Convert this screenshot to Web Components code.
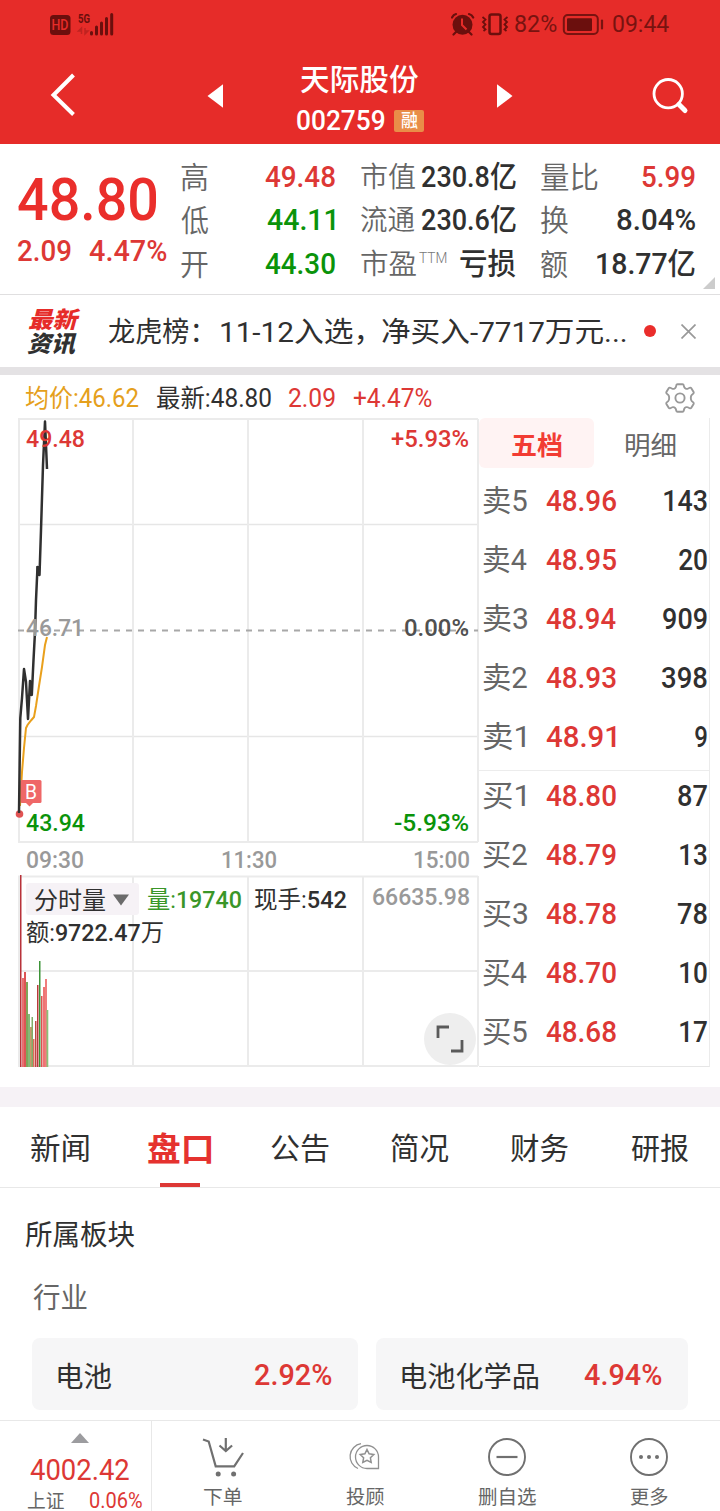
<!DOCTYPE html>
<html lang="zh-CN">
<head>
<meta charset="utf-8">
<title>天际股份 002759</title>
<style>
  body { margin: 0; background: #fff; font-family: Roboto, "Noto Sans CJK SC", sans-serif; color: #303030; }
</style>
</head>
<body>
<stock-app></stock-app>
<script>
class Base extends HTMLElement {
  constructor() {
    super();
    this.attachShadow({ mode: 'open' });
  }
  connectedCallback() {
    if (!this.shadowRoot.firstChild) this.shadowRoot.innerHTML = this.render();
  }
}

class StockApp extends Base {
  render() {
    return `<style>
      :host { display: flex; flex-direction: column; width: 720px; height: 1511px; overflow: hidden; }
    </style>
    <status-bar></status-bar>
    <nav-bar></nav-bar>
    <quote-panel></quote-panel>
    <news-bar></news-bar>
    <chart-header></chart-header>
    <market-board></market-board>
    <tab-strip></tab-strip>
    <sector-panel></sector-panel>
    <bottom-bar></bottom-bar>`;
  }
}

class StatusBar extends Base {
  render() {
    return `<style>
      :host { display: flex; justify-content: space-between; align-items: center; height: 48px; box-sizing: border-box;
        padding: 0 51px 0 49px; background: #e62c29; color: #781310; }
      .g { display: flex; align-items: center; }
      svg { display: block; flex: none; }
    </style>
    <div class="g">
      <svg width="66" height="48" viewBox="49 0 66 48">
        <rect x="50" y="15" width="20.500" height="20" rx="3.500" fill="#6b0f0d"/>
        <text x="51.500" y="30" font-size="14" font-weight="500" textLength="17" lengthAdjust="spacingAndGlyphs" fill="#e62c29">HD</text>
        <text x="78" y="22.800" font-size="13.500" font-weight="700" textLength="12" lengthAdjust="spacingAndGlyphs" fill="#6b0f0d">5G</text>
        <path d="M81.500 34V28l-3 3h3M85 28v6l3-3h-3" stroke="#bf2320" stroke-width="1.500" fill="none"/>
        <path d="M91.500 32.500v1.500M96.500 27v7M101.500 23v11M106.500 18.500v15.500M111.700 14.500v19.500" stroke="#6b0f0d" stroke-width="3" stroke-linecap="round"/>
      </svg>
    </div>
    <div class="g">
      <svg width="64" height="48" viewBox="451 0 64 48">
        <g fill="#6b0f0d" stroke="#6b0f0d">
          <circle cx="462.500" cy="24.800" r="10" stroke="none"/>
          <path d="M452 17.500q1.500-3 4-3.500M469 14q3 .8 4.200 3.500M456 32l-2.500 2.500M469 32l2.500 2.500" stroke-width="2.200" fill="none" stroke-linecap="round"/>
          <path d="M462 18.500v6.500l4.500 4.500" stroke="#e62c29" stroke-width="2" fill="none"/>
          <rect x="489.500" y="14.500" width="11" height="19.500" rx="2" fill="none" stroke-width="2.500"/>
          <path d="M482.500 17l3 2.500-2.500 2.500 2.500 2.500-2.500 2.500 2.500 2.500-2 1.500M507.500 17l-3 2.500 2.500 2.500-2.500 2.500 2.500 2.500-2.500 2.500 2 1.500" fill="none" stroke-width="1.800"/>
        </g>
      </svg>
      <fit-text size="23.500" ink="42" dy=".5">82%</fit-text>
      <svg width="56" height="48" viewBox="557 0 56 48">
        <rect x="563.800" y="15" width="34" height="19" rx="4" fill="none" stroke="#781310" stroke-width="2"/>
        <rect x="567" y="18.300" width="25" height="12.700" rx="1" fill="#6b0f0d"/>
        <path d="M602 20.500v8" stroke="#781310" stroke-width="2.200" stroke-linecap="round"/>
      </svg>
      <fit-text size="23.500" ink="56" dy=".5">09:44</fit-text>
    </div>`;
  }
}

class NavBar extends Base {
  render() {
    return `<style>
      :host { display: grid; grid-template-columns: 297px 128px 295px; height: 96px; background: #e62c29; color: #fff; }
      svg { display: block; }
      .mid { display: flex; flex-direction: column; padding-top: 15px; }
      .name { padding-left: 4px; height: 31px; font-weight: 500; display: flex; align-items: center; }
      .code { display: flex; align-items: center; gap: 9px; height: 24px; margin-top: 14.500px; font-weight: 500; }
      .tag { width: 30px; height: 22px; border-radius: 2px; background: #e98d48; display: flex; align-items: center; justify-content: center; }
    </style>
    <svg width="297" height="96" viewBox="0 48 297 96">
      <path d="M73.500 75L53.500 95l20 19.500" fill="none" stroke="#fff" stroke-width="4"/>
      <path d="M207.500 96L223 84.300v23.500z" fill="#fff"/>
    </svg>
    <div class="mid">
      <div class="name"><fit-text size="30" ink="117.500" dy="1">天际股份</fit-text></div>
      <div class="code"><fit-text size="27.500" ink="88">002759</fit-text><div class="tag"><fit-text size="18" ink="17" dy="0">融</fit-text></div></div>
    </div>
    <svg width="295" height="96" viewBox="425 48 295 96">
      <path d="M512.500 96L497 84.300v23.500z" fill="#fff"/>
      <circle cx="668.200" cy="93.700" r="14.200" fill="none" stroke="#fff" stroke-width="2.800"/>
      <path d="M679 104.500l6 6" stroke="#fff" stroke-width="5" stroke-linecap="round"/>
    </svg>`;
  }
}

class QuotePanel extends Base {
  render() {
    const row = (cls, l, lw, ls, v, vw, extra = '') =>
      `<div class="r"><fit-text size="${ls}" ink="${lw}" dy="1" class="l">${l}</fit-text>${extra}<fit-text size="30" ink="${vw}" class="${cls}">${v}</fit-text></div>`;
    return `<style>
      :host { position: relative; display: grid; grid-template-columns: 163px 154px 181px 178.500px; box-sizing: border-box; height: 151px;
        padding: 11px 0 0 18px; border-bottom: 1px solid #e0dfe0; }
      .price { color: #ea2e2b; font-weight: 500; padding-top: 15px; }
      .chg { display: flex; gap: 18px; color: #dd3835; font-weight: 500; padding-top: 6.500px; }
      .c { display: flex; flex-direction: column; }
      .r { display: flex; justify-content: space-between; align-items: center; height: 43.670px; font-weight: 500; }
      .l { color: #666; font-weight: 350; }
      .up { color: #dd3835; } .down { color: #0a930a; }
      .c2 { padding-left: 26px; } .c3 { padding-left: 25px; }
      .ttm { color: #777; font-weight: 300; margin-left: -10px; }
      svg { position: absolute; right: 5px; bottom: 5px; }
    </style>
    <div><div class="price"><fit-text size="60" ink="139">48.80</fit-text></div>
      <div class="chg"><fit-text size="29" ink="52.500">2.09</fit-text><fit-text size="29" ink="78">4.47%</fit-text></div></div>
    <div class="c">${row('up','高',27,30,'49.48',70)}${row('down','低',27,30,'44.11',68)}${row('down','开',27,30,'44.30',70)}</div>
    <div class="c c2">${row('','市值',54,28,'230.8亿',94)}${row('','流通',54,28,'230.6亿',94)}${row('','市盈',55,28,'亏损',56,'<fit-text class="ttm" size="15.500" ink="28" dy="-5.500">TTM</fit-text>')}</div>
    <div class="c c3">${row('up','量比',57,30,'5.99',53)}${row('','换',27,30,'8.04%',78)}${row('','额',27,30,'18.77亿',98)}</div>
    <svg width="12" height="12"><path d="M0 12L12 0v12z" fill="#ccc"/></svg>`;
  }
}

class NewsBar extends Base {
  render() {
    return `<style>
      :host { display: flex; align-items: center; box-sizing: border-box; height: 80px; padding: 0 24px 0 27px; border-bottom: 8px solid #e4e2e4; }
      .logo { width: 81px; font-weight: 900; font-style: italic; display: flex; flex-direction: column; gap: 1px; padding-top: 2px; }
      .logo :first-child { color: #e62c29; margin-left: 1px; }
      .txt { display: flex; width: 519px; padding-top: 5px; }
      .dot { width: 12px; height: 12px; border-radius: 50%; background: #ea2d2b; margin: 0 25px 0 17px; }
    </style>
    <div class="logo"><fit-text size="23" ink="53">最新</fit-text><fit-text size="23" ink="50">资讯</fit-text></div>
    <div class="txt"><fit-text size="28.500" ink="91">龙虎榜：</fit-text><fit-text size="28.500" ink="143" style="margin-left:22px">11-12入选，</fit-text><fit-text size="28.500" ink="244" style="margin-left:18px">净买入-7717万元...</fit-text></div>
    <div class="dot"></div>
    <svg width="15" height="15"><path d="M.5.5l14 14M14.500.5l-14 14" stroke="#999" stroke-width="1.700"/></svg>`;
  }
}

class ChartHeader extends Base {
  render() {
    return `<style>
      :host { display: flex; align-items: center; box-sizing: border-box; height: 43px; padding: 2px 24px 0 25px; }
      .a { color: #e5a01c; } .b { color: #dd3835; }
      fit-text { margin-right: 18px; }
      svg { margin-left: auto; }
    </style>
    <fit-text class="a" size="25" ink="114" dy=".5">均价:46.62</fit-text>
    <fit-text size="25" ink="114" dy=".5">最新:48.80</fit-text>
    <fit-text class="b" size="25" ink="46" dy=".5">2.09</fit-text>
    <fit-text class="b" size="25" ink="79" dy=".5">+4.47%</fit-text>
    <svg width="32" height="32" viewBox="-16 -16 32 32" fill="none" stroke="#999" stroke-width="1.900" stroke-linejoin="round">
      <path d="M-2.500-14.500h5q1 0 1.200 1l.5 2q.3 1.200 1.500 1.700t2 0l2-1q1-.5 1.600.5l2.300 4q.5 1-.3 1.700l-1.500 1.400q-1 1-1 3.200t1 3.200l1.500 1.400q.8.700.3 1.700l-2.300 4q-.6 1-1.600.5l-2-1q-1-.5-2 0t-1.500 1.700l-.5 2q-.2 1-1.200 1h-5q-1 0-1.200-1l-.5-2q-.3-1.200-1.500-1.700t-2 0l-2 1q-1 .5-1.600-.5l-2.300-4q-.5-1 .3-1.700l1.500-1.400q1-1 1-3.200t-1-3.200l-1.500-1.400q-.8-.7-.3-1.700l2.300-4q.6-1 1.600-.5l2 1q1 .5 2 0t1.500-1.700l.5-2q.2-1 1.200-1z" transform="scale(1 .95)"/>
      <circle r="4.600"/>
    </svg>`;
  }
}

class MarketBoard extends Base {
  render() {
    return `<style>
      :host { display: grid; grid-template-columns: 479px 231px; height: 669px; border-bottom: 20px solid #f6f2f6; }
    </style>
    <time-chart></time-chart><order-book></order-book>`;
  }
}

class TimeChart extends Base {
  render() {
    const t = (x, y, w, s, fill = '#303030', size = 24) =>
      `<text x="${x - 1}" y="${y}" textLength="${w + 2}" lengthAdjust="spacingAndGlyphs" fill="${fill}" font-size="${size}">${s}</text>`;
    const bars = [[20,875,'#b8323a',1.5],[22,978,'#e87070',2],[24,972,'#dd5555',2],[26,982,'#7da65a',2],[28,1014,'#86b878',2],[30,1027,'#c99a6c',2],
      [31.5,1017,'#7fae68',1.5],[33,1039,'#e06a5a',1.5],[35,1021,'#c04545',1.5],[37,985,'#b83a3a',1.5],[39,961,'#3c9438',1.5],[41,996,'#dd5050',1.5],[43,987,'#ee7474',2],[45,979,'#f07c7c',2],[46.5,1010,'#8ac078',1.8]];
    return `<style>:host { display: block; } svg { display: block; font-weight: 500; } tspan { font-weight: 400; }</style>
    <svg width="479" height="669" viewBox="0 418 479 669">
      <g stroke="#ebebeb" stroke-width="2" fill="none">
        <path d="M18 419H478M18 842H478M18 876.500H478M18 971H478M18 1066H478"/>
        <path d="M18 524.500H478M18 736.500H478" stroke-width="1.300" stroke="#e6e6e6"/>
        <path d="M19 419V842M133 419V842M248 419V842M363 419V842M478 419V842M19 876V1066M133 876V1066M248 876V1066M363 876V1066M478 876V1066"/>
      </g>
      <path d="M18 630.500H478" stroke="#a8a8a8" stroke-width="2" stroke-dasharray="6 6"/>
      ${bars.map(b => `<rect x="${b[0]}" y="${b[1]}" width="${b[3]}" height="${1067 - b[1]}" fill="${b[2]}"/>`).join('')}
      <path d="M20 806L22 772 24 748 26 728 27.500 725 31 720.500 34 717 36 706 39 686 42 667 45 645 47 637" fill="none" stroke="#e9a01c" stroke-width="2"/>
      <circle cx="19.500" cy="814" r="3.800" fill="#e15353"/>
      <rect x="20.500" y="780" width="21" height="23" rx="1.500" fill="#ef6767"/>
      <path d="M26 803h7l-3.500 3.500z" fill="#ef6767"/>
      ${t(26, 799, 10, 'B', '#fff', 20).replace('<text', '<text font-weight="400"')}
      <path d="M19 813L19.700 760 20.300 718 22 698 24 669 26 682 28 719 30 681 31.800 695 33.500 660 35 632 36 600 37.500 567 39.500 575 41 530 43 465 45 421.500 47 469" fill="none" stroke="#303030" stroke-width="2.500" stroke-linejoin="round"/>
      <path d="M38 566v10M30.500 682v14" stroke="#303030" stroke-width="3"/>
      ${t(27,447,57,'49.48','#dd3835')}${t(392,447,76,'+5.93%','#dd3835')}
      ${t(27,636,56,'46.71','#999')}${t(405,636,63,'0.00%','#505050')}
      ${t(27,831,57,'43.94','#0a930a')}${t(395,831,73,'-5.93%','#0a930a')}
      ${t(27,868,56,'09:30','#999')}${t(222,868,54,'11:30','#999')}${t(414,868,55,'15:00','#999')}
      <rect x="26" y="883" width="113" height="32" rx="3" fill="#f6f2f6"/>
      <g font-weight="400">${t(35,908.500,70,'分时量')}</g>
      <path d="M113 894.500h16l-8 11z" fill="#6b6b6b"/>
      ${t(148,908,93,'<tspan>量:</tspan>19740','#3a9628')}${t(255,908,91,'<tspan>现手:</tspan>542')}
      ${t(373,904.500,96,'66635.98','#999')}${t(27,941,136,'<tspan>额:</tspan>9722.47<tspan>万</tspan>')}
      <circle cx="450" cy="1039" r="26" fill="#eee"/>
      <path d="M438 1038v-11h11M451 1051h11v-11" fill="none" stroke="#5a5a5a" stroke-width="2.800"/>
    </svg>`;
  }
}

class OrderBook extends Base {
  render() {
    const rows = [['卖5','48.96','143',43],['卖4','48.95','20',28],['卖3','48.94','909',44],['卖2','48.93','398',45],['卖1','48.91','9',12],
      ['买1','48.80','87',29],['买2','48.79','13',27],['买3','48.78','78',29],['买4','48.70','10',27],['买5','48.68','17',27]];
    return `<style>
      :host { display: block; box-sizing: border-box; height: 649px; border-right: 1px solid #ebebeb; border-bottom: 1px solid #e6e6e6; }
      .tabs { display: grid; grid-template-columns: 115px 114px; height: 50px; margin-bottom: 3.500px; }
      .tabs div { display: flex; align-items: center; justify-content: center; padding-top: 3px; box-sizing: border-box; }
      .on { background: #fff3f3; border-radius: 6px; color: #f23c33; font-weight: 700; }
      .off { color: #666; }
      .row { display: grid; grid-template-columns: 62.500px 1fr auto; align-items: center; height: 59px; box-sizing: border-box; padding: 0 2px 0 4px; }
      .row.sep { background: linear-gradient(#ececec, #ececec) 0 3.500px / 100% 1px no-repeat; }
      .l { color: #666; font-weight: 400; } .p { color: #dd3835; font-weight: 500; } .q { font-weight: 500; }
    </style>
    <div class="tabs"><div class="on"><fit-text size="26" ink="50" dy="1">五档</fit-text></div><div class="off"><fit-text size="26" ink="50" dy="1">明细</fit-text></div></div>
    ${rows.map((r, i) => `<div class="row ${i === 5 ? 'sep' : ''}"><fit-text class="l" size="30" ink="${/1/.test(r[0]) ? 42 : 44}">${r[0]}</fit-text><fit-text class="p" size="30" ink="70">${r[1]}</fit-text><fit-text class="q" size="30" ink="${r[3]}">${r[2]}</fit-text></div>`).join('')}`;
  }
}

class TabStrip extends Base {
  render() {
    const tabs = ['新闻', '盘口', '公告', '简况', '财务', '研报'];
    return `<style>
      :host { display: grid; grid-template-columns: repeat(6, 120px); height: 80px; border-bottom: 1px solid #e8e8e8; }
      div { display: flex; flex-direction: column; align-items: center; justify-content: space-between; padding-top: 27px; box-sizing: border-box; height: 80px; }
      .on { color: #e5322f; font-weight: 700; padding-top: 25px; }
      .on::after { content: ""; width: 40px; height: 4px; background: #dd3835; }
    </style>
    ${tabs.map((t, i) => `<div class="${i === 1 ? 'on' : ''}"><fit-text size="${i === 1 ? 33 : 29.5}" ink="${i === 1 ? 63.5 : 57.5}" dy="1">${t}</fit-text></div>`).join('')}`;
  }
}

class SectorPanel extends Base {
  render() {
    return `<style>
      :host { display: block; height: 232px; box-sizing: border-box; padding: 32px 32px 0 24.500px; }
      .k { margin: 35px 0 0 8px; color: #666; }
      .cards { display: grid; grid-template-columns: 326px 312px; gap: 18px; margin: 27px 0 0 7.500px; }
      .card { display: flex; justify-content: space-between; align-items: center; height: 72px; padding: 3px 26px 0; box-sizing: border-box; background: #f6f6f7; border-radius: 8px; }
      .card b { color: #dd3835; font-weight: 500; }
    </style>
    <fit-text size="28" ink="110" dy="2">所属板块</fit-text>
    <div class="k"><fit-text size="28" ink="54" dy="2">行业</fit-text></div>
    <div class="cards">
      <div class="card"><fit-text size="28" ink="53" dy="2">电池</fit-text><b><fit-text size="29" ink="77" dy="0">2.92%</fit-text></b></div>
      <div class="card"><fit-text size="28" ink="136" dy="2">电池化学品</fit-text><b><fit-text size="29" ink="78" dy="0">4.94%</fit-text></b></div>
    </div>`;
  }
}

class BottomBar extends Base {
  render() {
    const icons = [
      ['下单', 38, `<path d="M203 1439.500l5.700 2 7 24.800h18.500l8.800-13.300M225.800 1438v12.500M219.500 1445.500l6.300 5.500 6.300-5.500" stroke-width="2.200"/><g fill="#707070" stroke="none"><circle cx="218.200" cy="1474" r="2.500"/><circle cx="233.600" cy="1474" r="2.500"/></g>`, 223],
      ['投顾', 38, `<g stroke="#909090" stroke-width="1.300"><path d="M367 1445.500a11.500 11.500 0 1 0 0 23h11.500v-11.500a11.500 11.500 0 0 0-11.500-11.500z"/><path d="M361 1443.700a13 13 0 0 0-3 24.800"/><path d="M367 1449.500l2.100 4.300 4.700.7-3.400 3.300.8 4.700-4.200-2.200-4.200 2.200.8-4.700-3.400-3.300 4.700-.7z" stroke-width="1.500"/></g>`, 365],
      ['删自选', 58, `<circle cx="507" cy="1457" r="18"/><path d="M496.500 1457h21" stroke-width="2.200"/>`, 507],
      ['更多', 38, `<circle cx="649" cy="1457" r="18"/><g fill="#707070" stroke="none"><circle cx="641" cy="1457" r="2"/><circle cx="649" cy="1457" r="2"/><circle cx="657" cy="1457" r="2"/></g>`, 649]];
    return `<style>
      :host { display: grid; grid-template-columns: 152px repeat(4, 142px); height: 91px; box-sizing: border-box; border-top: 1px solid #e8e8e8; background: #fff; color: #666; }
      .idx { border-right: 1px solid #e8e8e8; padding-top: 12px; }
      .idx svg { display: block; margin-left: 71px; }
      .v { color: #dd3835; margin: 11px 0 0 29.500px; }
      .row { display: flex; justify-content: space-between; align-items: center; padding: 5.500px 9px 0 27px; }
      .row .p { color: #dd3835; }
      .b { display: flex; flex-direction: column; align-items: center; padding-top: 14px; }
      .b svg { display: block; }
      .b fit-text { margin-top: 7.500px; }
    </style>
    <div class="idx"><svg width="18" height="10"><path d="M0 10L9 0l9 10z" fill="#9c9c9f"/></svg>
      <div class="v"><fit-text size="30" ink="99" dy=".5">4002.42</fit-text></div>
      <div class="row"><fit-text size="19.500" ink="37" dy="1">上证</fit-text><fit-text class="p" size="21.500" ink="52">0.06%</fit-text></div></div>
    ${icons.map(i => `<div class="b"><svg width="44" height="44" viewBox="${i[3] - 22} 1435 44 44" fill="none" stroke="#707070" stroke-width="1.900">${i[2]}</svg><fit-text size="19.500" ink="${i[1]}" dy="1">${i[0]}</fit-text></div>`).join('')}`;
  }
}

/* A single line of text whose drawn glyphs span exactly `ink` pixels. */
class FitText extends Base {
  render() {
    const size = +this.getAttribute('size'), ink = +this.getAttribute('ink'), dy = this.getAttribute('dy') || 0;
    const cs = getComputedStyle(this);
    const ctx = document.createElement('canvas').getContext('2d');
    ctx.font = `${cs.fontStyle} ${cs.fontWeight} ${size}px ${cs.fontFamily}`;
    const m = ctx.measureText(this.textContent);
    const k = ink / (m.actualBoundingBoxLeft + m.actualBoundingBoxRight);
    return `<style>
      :host { display: block; flex: none; width: ${ink}px; height: ${size}px; font-size: ${size}px; line-height: ${size}px; white-space: nowrap; }
      span { display: inline-block; transform-origin: 0 0; transform: translate(${m.actualBoundingBoxLeft * k}px, ${dy}px) scaleX(${k}); }
    </style><span><slot></slot></span>`;
  }
}

customElements.define('stock-app', StockApp);
customElements.define('status-bar', StatusBar);
customElements.define('nav-bar', NavBar);
customElements.define('quote-panel', QuotePanel);
customElements.define('news-bar', NewsBar);
customElements.define('chart-header', ChartHeader);
customElements.define('market-board', MarketBoard);
customElements.define('time-chart', TimeChart);
customElements.define('order-book', OrderBook);
customElements.define('tab-strip', TabStrip);
customElements.define('sector-panel', SectorPanel);
customElements.define('bottom-bar', BottomBar);
customElements.define('fit-text', FitText);
</script>
</body>
</html>
